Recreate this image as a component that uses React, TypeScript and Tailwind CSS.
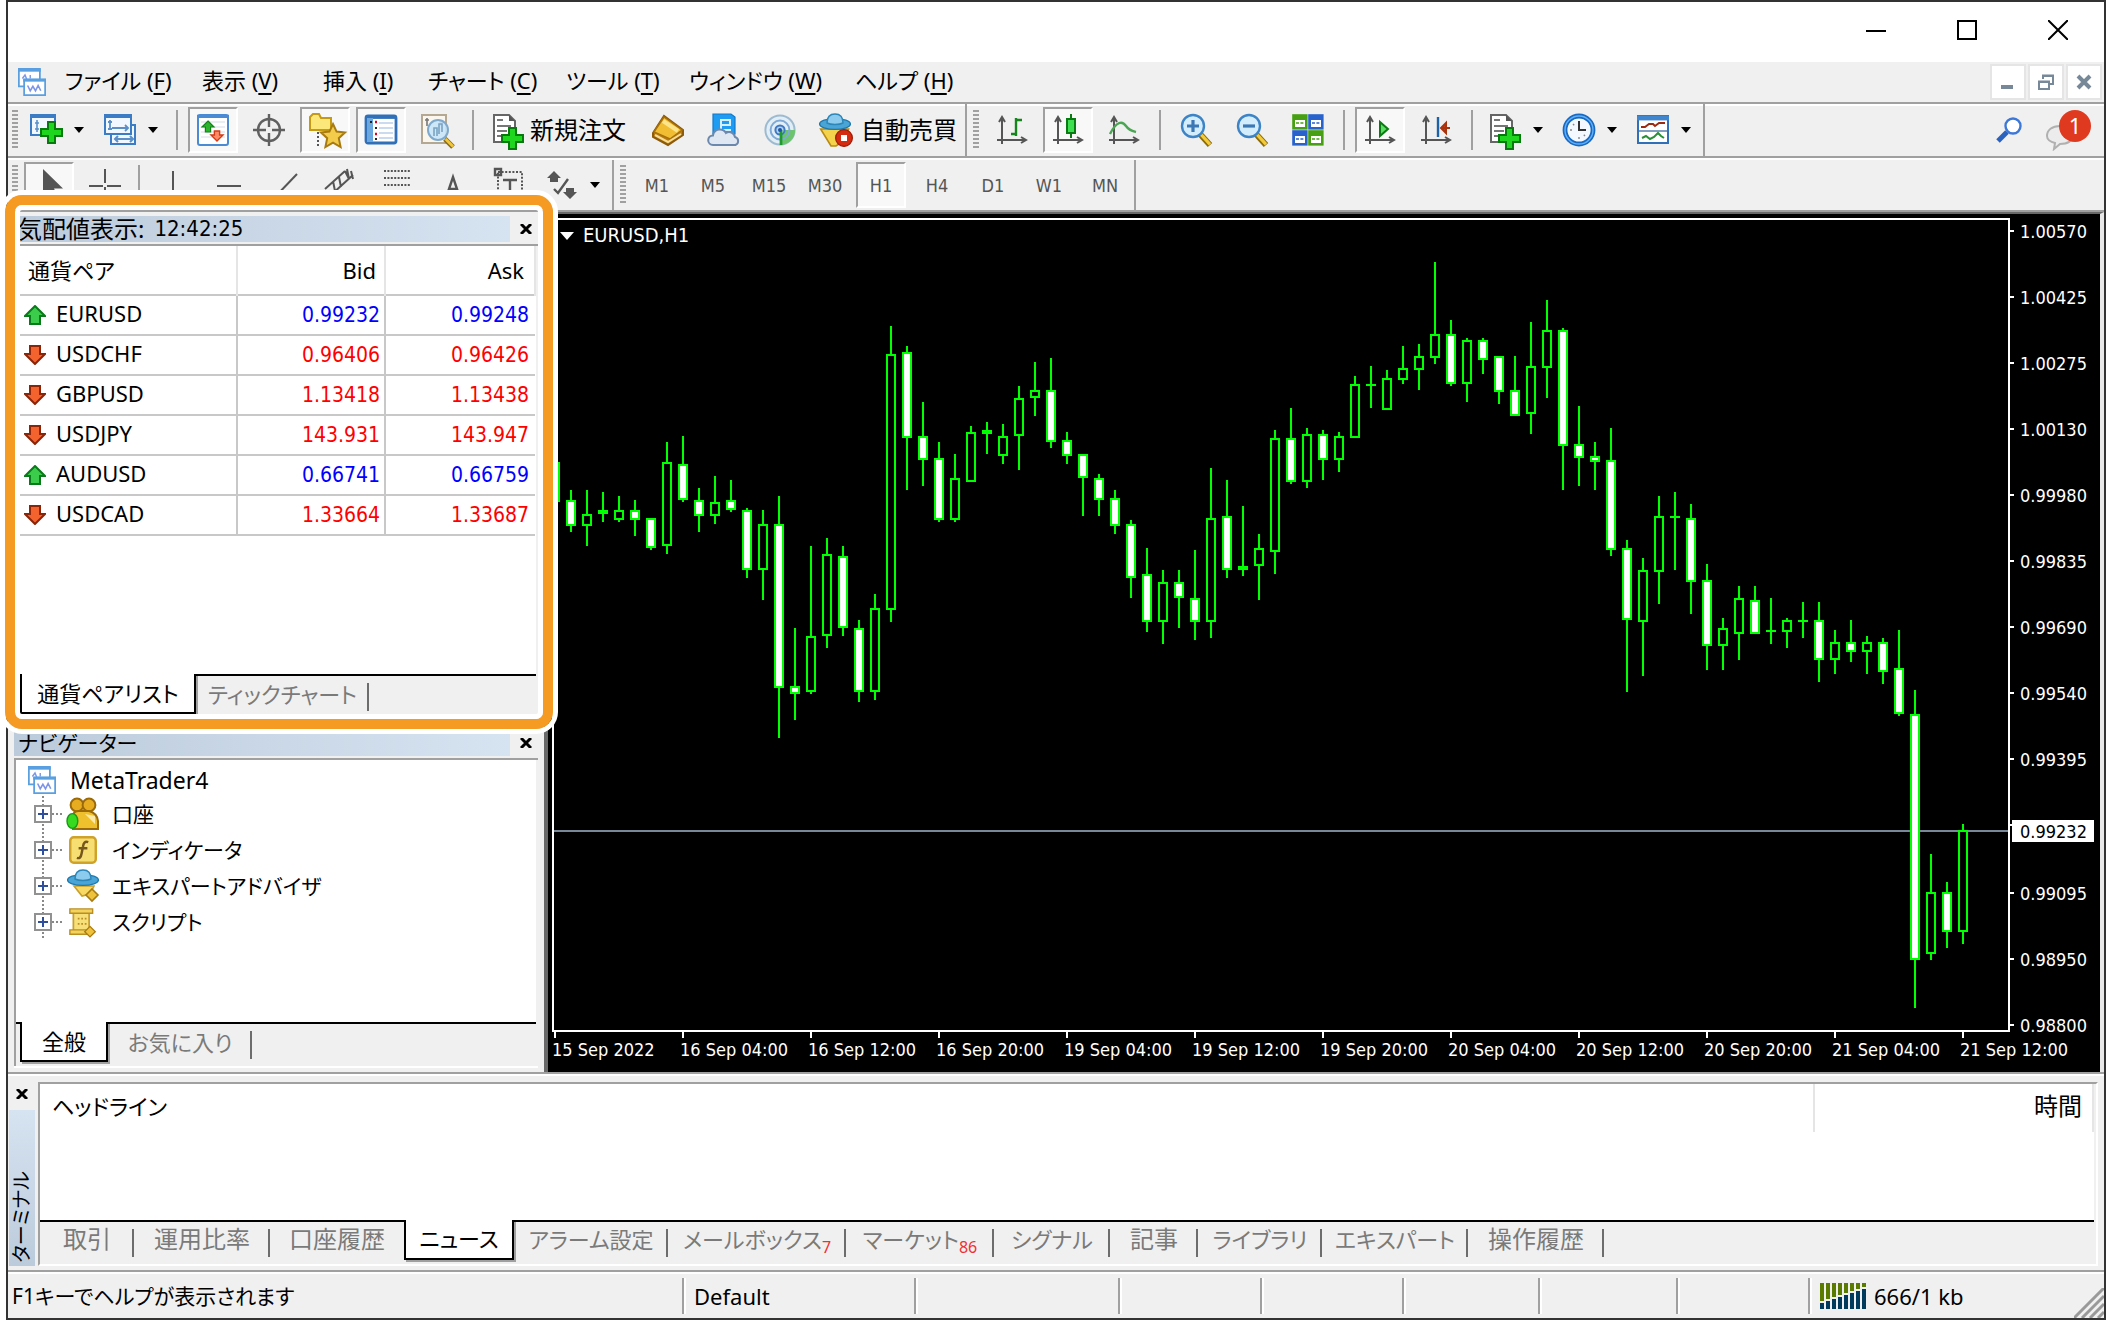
import type { ReactNode } from "react";

// [high, body top, body bottom, low, filled], one entry per hour
const candles: [number, number, number, number, number][] = [
  [126, 126, 146, 146, 1], [140, 145, 158, 161, 1], [140, 152, 158, 168, 0], [141, 150, 152, 156, 0],
  [143, 150, 155, 156, 0], [145, 150, 155, 163, 1], [154, 154, 169, 170, 1], [116, 126, 168, 172, 0],
  [113, 127, 145, 146, 1], [139, 145, 153, 161, 1], [133, 146, 153, 157, 0], [135, 145, 150, 151, 1],
  [149, 150, 180, 184, 1], [150, 157, 180, 195, 0], [143, 157, 239, 264, 1], [209, 238, 242, 255, 1],
  [168, 213, 241, 242, 0], [164, 172, 213, 219, 0], [168, 173, 209, 213, 1], [205, 209, 241, 246, 1],
  [192, 199, 241, 245, 0], [58, 72, 200, 206, 0], [68, 71, 114, 140, 1], [96, 113, 125, 138, 1],
  [116, 124, 155, 156, 1], [122, 134, 155, 156, 0], [108, 111, 136, 136, 0], [106, 110, 112, 122, 0],
  [107, 113, 123, 127, 0], [88, 94, 113, 130, 0], [76, 90, 94, 103, 0], [74, 90, 116, 119, 1],
  [111, 115, 123, 127, 1], [122, 122, 134, 153, 1], [132, 134, 145, 153, 1], [140, 144, 158, 162, 1],
  [155, 157, 184, 194, 1], [169, 182, 206, 211, 1], [180, 186, 206, 217, 0], [180, 186, 194, 209, 1],
  [170, 194, 206, 215, 1], [129, 154, 206, 214, 0], [135, 153, 180, 184, 1], [148, 178, 180, 183, 0],
  [162, 169, 178, 195, 0], [110, 114, 171, 182, 0], [99, 114, 136, 137, 1], [109, 112, 136, 139, 0],
  [110, 112, 125, 135, 1], [111, 113, 125, 131, 0], [83, 87, 114, 114, 0], [78, 87, 88, 99, 0],
  [80, 84, 100, 100, 0], [68, 79, 85, 87, 0], [67, 73, 80, 90, 0], [26, 62, 74, 77, 0],
  [55, 62, 87, 88, 1], [64, 65, 87, 96, 0], [64, 65, 75, 82, 1], [73, 73, 91, 97, 1],
  [73, 90, 103, 103, 1], [56, 78, 102, 112, 0], [45, 60, 79, 94, 0], [59, 60, 118, 140, 1],
  [98, 117, 124, 138, 1], [116, 123, 126, 140, 1], [109, 125, 170, 173, 1], [165, 169, 205, 241, 1],
  [174, 180, 206, 233, 0], [143, 153, 181, 197, 0], [141, 153, 154, 180, 0], [147, 154, 186, 202, 1],
  [177, 185, 218, 230, 1], [204, 209, 218, 230, 0], [188, 194, 212, 225, 0], [188, 195, 212, 212, 1],
  [194, 210, 211, 217, 0], [204, 205, 211, 219, 0], [196, 205, 206, 214, 0], [196, 205, 225, 236, 1],
  [210, 216, 225, 232, 0], [205, 216, 221, 226, 1], [213, 216, 221, 232, 0], [214, 216, 231, 237, 1],
  [210, 229, 252, 253, 1], [240, 252, 375, 399, 1], [322, 341, 372, 375, 0], [336, 341, 361, 369, 1],
  [307, 310, 361, 367, 0],
];

const currentPrice = { label: "0.99232", y: 617 };

// the tick right behind the current price carries no label
const priceTicks: [string, number][] = [
  ["1.00570", 17], ["1.00425", 83], ["1.00275", 149], ["1.00130", 215], ["0.99980", 281],
  ["0.99835", 347], ["0.99690", 413], ["0.99540", 479], ["0.99395", 545], ["", 611],
  ["0.99095", 679], ["0.98950", 745], ["0.98800", 811],
];

const timeTicks = [
  "15 Sep 2022", "16 Sep 04:00", "16 Sep 12:00", "16 Sep 20:00", "19 Sep 04:00", "19 Sep 12:00",
  "19 Sep 20:00", "20 Sep 04:00", "20 Sep 12:00", "20 Sep 20:00", "21 Sep 04:00", "21 Sep 12:00",
];

const quotes = [
  { symbol: "EURUSD", bid: "0.99232", ask: "0.99248", up: true },
  { symbol: "USDCHF", bid: "0.96406", ask: "0.96426", up: false },
  { symbol: "GBPUSD", bid: "1.13418", ask: "1.13438", up: false },
  { symbol: "USDJPY", bid: "143.931", ask: "143.947", up: false },
  { symbol: "AUDUSD", bid: "0.66741", ask: "0.66759", up: true },
  { symbol: "USDCAD", bid: "1.33664", ask: "1.33687", up: false },
];

const menus = [
  { label: "ファイル", accel: "F", width: "w-[137px]" },
  { label: "表示", accel: "V", width: "w-[121px]" },
  { label: "挿入", accel: "I", width: "w-[105px]" },
  { label: "チャート", accel: "C", width: "w-[138px]" },
  { label: "ツール", accel: "T", width: "w-[123px]" },
  { label: "ウィンドウ", accel: "W", width: "w-[166px]" },
  { label: "ヘルプ", accel: "H", width: "w-[120px]" },
];

const terminalTabs = [
  { label: "取引", width: "w-[94px]", size: "text-[24px]" },
  { label: "運用比率", width: "w-[136px]", size: "text-[24px]" },
  { label: "口座履歴", width: "w-[134px]", size: "text-[24px]" },
  { label: "ニュース", width: "w-[110px]", size: "text-[22px]", active: true },
  { label: "アラーム設定", width: "w-[154px]", size: "text-[22px]" },
  { label: "メールボックス", width: "w-[178px]", size: "text-[22px]", count: "7" },
  { label: "マーケット", width: "w-[148px]", size: "text-[22px]", count: "86" },
  { label: "シグナル", width: "w-[116px]", size: "text-[22px]" },
  { label: "記事", width: "w-[88px]", size: "text-[24px]" },
  { label: "ライブラリ", width: "w-[124px]", size: "text-[22px]" },
  { label: "エキスパート", width: "w-[146px]", size: "text-[22px]" },
  { label: "操作履歴", width: "w-[136px]", size: "text-[24px]" },
];

const timeframes = ["M1", "M5", "M15", "M30", "H1", "H4", "D1", "W1", "MN"];

const Icon = ({ children, className = "size-8" }: { children: ReactNode; className?: string }) => (
  <svg viewBox="0 0 16 16" className={`${className} shrink-0 overflow-visible`} fill="none" aria-hidden="true">
    {children}
  </svg>
);

const Plus = ({ x, y }: { x: number; y: number }) => (
  <path
    transform={`translate(${x} ${y})`}
    d="M4 .5h3.500v3.500h3.500v3.500h-3.500v3.500h-3.500v-3.500h-3.500v-3.500h3.500z"
    fill="#1fd61f"
    stroke="#067a0c"
  />
);

const Gem = ({ x, y }: { x: number; y: number }) => (
  <path transform={`translate(${x} ${y})`} d="M3 0l3 3-3 3-3-3z" fill="#eec23c" stroke="#a87b12" strokeWidth=".8" />
);

const Axes = () => (
  <path d="M3 15V2M1.500 4L3 1.500 4.500 4M.5 13H15M12.500 11.500L15 13l-2.500 1.500" stroke="#555" />
);

const NewChartIcon = () => (
  <Icon>
    <rect x=".5" y=".5" width="12" height="10" fill="#f2f8ff" stroke="#3b7cc4" />
    <path d="M0 1h13" stroke="#3b7cc4" strokeWidth="2" />
    <path d="M3.500 3v6M2.500 4.500h2M2.500 7.500h2M5 8.500h4" stroke="#5a8fc8" strokeWidth=".8" />
    <Plus x={5} y={3.5} />
  </Icon>
);

const ProfilesIcon = () => (
  <Icon>
    <rect x="3.500" y="5.500" width="12" height="9.500" fill="#f2f8ff" stroke="#3b7cc4" />
    <path d="M6 12.500h8M7 11l-1.500 1.500L7 14M13 11l1.500 1.500L13 14" stroke="#5a8fc8" />
    <rect x=".5" y=".5" width="13" height="9.500" fill="#f2f8ff" stroke="#3b7cc4" />
    <path d="M0 1h14" stroke="#3b7cc4" strokeWidth="2" />
    <path d="M3 3v5M2 4h2M2 7.500h2M4 7h8M10.500 5.500L12 7l-1.500 1.500" stroke="#5a8fc8" strokeWidth=".9" />
  </Icon>
);

const MarketWatchIcon = () => (
  <Icon>
    <rect x=".5" y=".5" width="15" height="15" rx="1" fill="#fff" stroke="#4a8bd4" />
    <path d="M0 1.200h16" stroke="#4a8bd4" strokeWidth="1.600" />
    <path d="M2 4h12M2 6.500h12M2 9h12M2 11.500h12" stroke="#d4dde6" strokeWidth=".5" />
    <path d="M5.500 3.500l3 3H6.800V9H4.200V6.500H2.500z" fill="#2cb52c" stroke="#14821a" strokeWidth=".6" />
    <path d="M10 13.500l-3-3h1.700V8.500h2.600v2H13z" fill="#ff8b66" stroke="#d23b15" strokeWidth=".7" />
  </Icon>
);

const CrosshairIcon = () => (
  <Icon>
    <circle cx="8" cy="8" r="5.500" stroke="#606060" strokeWidth="1.200" />
    <path d="M8 0v6.500M8 9.500V16M0 8h6.500M9.500 8H16" stroke="#606060" strokeWidth="1.200" />
  </Icon>
);

const FolderStarIcon = () => (
  <Icon>
    <path d="M.5 1.500L2 0h3l1 2h5v6H.5z" fill="#fbe77a" stroke="#c79a14" />
    <path d="M4.500 9v8" stroke="#555" strokeDasharray="1 1" />
    <path d="M12 5l1.800 3.800 4.200.5-3.100 2.800.9 4.400-3.800-2.200-3.800 2.200.9-4.400L6 9.300l4.200-.5z" fill="#f2cc4a" stroke="#a87b12" />
  </Icon>
);

const DataWindowIcon = () => (
  <Icon>
    <rect x=".5" y="1" width="15" height="13.500" rx="1" fill="#fff" stroke="#2f70b8" strokeWidth="1.400" />
    <path d="M1 1.700h14" stroke="#2f70b8" strokeWidth="1.500" />
    <rect x="1" y="2" width="3" height="12" fill="#6ba8e0" />
    <path d="M7 4.500h7M7 7h7M7 9.500h7M7 12h7" stroke="#b9cfea" strokeWidth=".8" />
    <path d="M5 4h1M5 10h1" stroke="#e00024" strokeWidth="1.200" />
    <path d="M5 7h1M5 12.500h1M2.500 4h1" stroke="#222" />
  </Icon>
);

const TesterIcon = () => (
  <Icon>
    <rect x=".5" y=".5" width="12" height="14" fill="#faf6ee" stroke="#b5a892" />
    <path d="M3 2v4M2 3h2M10 3v3M9 4h2" stroke="#777" strokeWidth=".8" />
    <circle cx="8.500" cy="8" r="5" fill="#c8e6fa" fillOpacity=".9" stroke="#7fa9cc" />
    <path d="M6.500 11V7h1.500v4M9 10V5h1.500v4" stroke="#7aa3c4" strokeWidth=".8" />
    <path d="M12 12.500l4 4" stroke="#8b6a10" strokeWidth="2.600" />
    <path d="M12.300 12.500l3.700 3.700" stroke="#f0c63c" strokeWidth="1.400" />
  </Icon>
);

const NewOrderIcon = () => (
  <Icon>
    <path d="M1 .5h7.500l3 3V14H1z" fill="#fff" stroke="#666" />
    <path d="M8.500.5v3h3z" fill="#555" />
    <path d="M2.500 3h3M2.500 6h7M2.500 8.500h5M2.500 11h4" stroke="#777" />
    <Plus x={4.5} y={6.500} />
  </Icon>
);

const BookIcon = () => (
  <Icon>
    <path d="M.5 9.500L6 1l9.500 7v2.500L8 15.500.5 11.500z" fill="#b57a12" stroke="#8c5a0a" />
    <path d="M1 9L6 1.500 15 8l-6 4.500z" fill="#f0bd33" stroke="#a87008" strokeWidth=".7" />
    <path d="M5.500 3.500L13 8.500" stroke="#fbe48a" strokeWidth="2" />
    <path d="M1.500 10.500L8 14l6.500-4" stroke="#f7dc94" />
  </Icon>
);

const CloudPhoneIcon = () => (
  <Icon>
    <path d="M2.500 0h9l2 1.500V10h-11z" fill="#1e9bf2" stroke="#1478c8" strokeWidth=".6" />
    <path d="M6 3h5.500M6 5.500h5.500M6 8h5.500M6.500 3v5M11 3v2.500" stroke="#d6efff" />
    <path d="M2.500 15.500a2.400 2.400 0 010-4.800 3.500 3.500 0 016.500-1.200 3 3 0 014.500 2 2.100 2.100 0 01.2 4z" fill="#dfe7f2" stroke="#6c88ad" />
  </Icon>
);

const SignalIcon = () => (
  <Icon>
    <circle cx="8" cy="8" r="7.300" fill="#e2eef6" stroke="#9dbbd0" />
    <path d="M8.500 8L15.500 8A7.300 7.300 0 018.500 15.500z" fill="#6cc56c" />
    <circle cx="8" cy="8" r="4.700" stroke="#7fa9d6" />
    <circle cx="8" cy="8" r="2.300" fill="#b4d1f0" stroke="#3f78c4" />
    <path d="M8.500 8v7.500" stroke="#1f9a2e" strokeWidth="1.400" />
    <circle cx="8" cy="8" r="1" fill="#1d56a8" />
  </Icon>
);

const Hat = () => (
  <>
    <ellipse cx="8" cy="5" rx="7.700" ry="2.700" fill="#4aa5d6" stroke="#1d78ad" strokeWidth=".7" />
    <path d="M4 4.500C4 1.500 5.500 0 8 0s4 1.500 4 4.500c-2 1-6 1-8 0z" fill="#8ccbee" stroke="#2c86b8" strokeWidth=".7" />
  </>
);

const AutoTradeIcon = () => (
  <Icon>
    <path d="M.8 7.500h14L13 13l-4.500 3H6z" fill="#f5d24c" stroke="#b88a14" strokeWidth=".8" />
    <Hat />
    <circle cx="12.500" cy="12" r="4.200" fill="#d42a10" stroke="#9c1b06" strokeWidth=".6" />
    <rect x="11" y="10.500" width="3" height="3" fill="#fff" />
  </Icon>
);

const ZoomIcon = ({ plus }: { plus?: boolean }) => (
  <Icon>
    <path d="M10 10l5 5.500" stroke="#8b6a10" strokeWidth="3" />
    <path d="M10.300 10l4.700 5.200" stroke="#f3cb3a" strokeWidth="1.600" />
    <circle cx="6.500" cy="6" r="5.500" fill="#d4edfc" stroke="#3d84c6" strokeWidth="1.200" />
    <path d={plus ? "M3.500 6h6M6.500 3v6" : "M3.500 6h6"} stroke="#3c78b4" strokeWidth="1.600" />
  </Icon>
);

const TileIcon = () => (
  <Icon>
    {[[0, 0, "#46a012"], [8, 0, "#2862cc"], [0, 8, "#2862cc"], [8, 8, "#46a012"]].map(([x, y, fill]) => (
      <g key={`${x}-${y}`} transform={`translate(${x} ${y})`}>
        <path d="M.1.100h7.700v7.700H.1z" fill={fill as string} />
        <path d="M1.500 3h5v3.500h-5z" fill="#fff" />
        <path d="M2 4.500h4" stroke={fill as string} strokeWidth=".7" strokeDasharray="1.500 .7" />
      </g>
    ))}
  </Icon>
);

const ClockIcon = () => (
  <Icon>
    <circle cx="8" cy="8" r="7" fill="#f4f9ff" stroke="#1769c4" strokeWidth="2.400" />
    <circle cx="8" cy="8" r="7" stroke="#62b0f5" strokeWidth=".7" />
    <path d="M8 3.500V8h3.500" stroke="#333" />
    <path d="M8 12.500v-1M3.500 8h1M5 5l.6.6M11 11l-.6-.6" stroke="#888" strokeWidth=".7" />
  </Icon>
);

const TemplateIcon = () => (
  <Icon>
    <rect x=".5" y="1" width="15" height="13.500" fill="#fff" stroke="#2f70b8" />
    <path d="M0 2h16" stroke="#3f86cf" strokeWidth="2.400" />
    <path d="M1 8.500h14" stroke="#7f9ec0" />
    <path d="M2 6.500h2l2-1.500h2l1 1 2-1.500h3" stroke="#9c2a10" />
    <path d="M2.500 12l2-1 2 1.500 2-1 2-2 1.500 1.500 1.500 1" stroke="#2a9038" />
  </Icon>
);

const TerminalLogo = ({ className = "size-7" }: { className?: string }) => (
  <Icon className={className}>
    <rect x=".5" y=".5" width="12" height="10" fill="#fff" stroke="#5a9fe0" />
    <path d="M0 1.200h13" stroke="#5a9fe0" strokeWidth="1.800" />
    <path d="M2.500 6l1.500-2 1 2.500M7 4v2" stroke="#7d95e8" strokeWidth=".8" />
    <rect x="3.500" y="6.500" width="12" height="9" fill="#fff" stroke="#5a9fe0" />
    <path d="M3 7h13" stroke="#5a9fe0" strokeWidth="1.600" />
    <path d="M5.500 10l1.500 3 1.500-2.500L10 13l1.500-3L13 13" stroke="#7d95e8" strokeWidth=".9" />
  </Icon>
);

const Caret = () => (
  <svg viewBox="0 0 10 6" className="h-[6px] w-[10px] shrink-0" aria-hidden="true">
    <path d="M0 0h10L5 6z" fill="#000" />
  </svg>
);

const CloseMark = () => (
  <svg viewBox="0 0 12 10" className="h-[10px] w-3" aria-hidden="true">
    <path d="M1 0l10 10M11 0L1 10" stroke="#000" strokeWidth="3" />
  </svg>
);

const ToolButton = ({ children, label, pressed }: { children: ReactNode; label: string; pressed?: boolean }) => (
  <button
    aria-label={label}
    className={`flex h-[46px] w-[50px] shrink-0 items-center justify-center border-2 text-[18px] text-[#555] ${
      pressed ? "border-t-[#a0a0a0] border-r-white border-b-white border-l-[#a0a0a0] bg-[#f8f8f8]" : "border-transparent"
    }`}
  >
    {children}
  </button>
);

const DropButton = ({ children, label }: { children: ReactNode; label: string }) => (
  <button aria-label={label} className="flex h-[46px] w-[68px] shrink-0 items-center justify-between pr-2 pl-[6px]">
    {children}
    <Caret />
  </button>
);

const Separator = ({ className = "mx-1" }: { className?: string }) => (
  <div className={`h-10 w-[2px] shrink-0 bg-[#a0a0a0] ${className}`} />
);

const Grip = () => (
  <div className="h-10 w-[6px] shrink-0 bg-[repeating-linear-gradient(to_bottom,#a0a0a0_0_2px,#f0f0f0_2px_4px)]" />
);

const PanelTitle = ({ children }: { children: ReactNode }) => (
  <div className="flex h-[26px] shrink-0 items-center">
    <h2 className="flex h-full flex-1 items-center bg-linear-to-r from-[#bccbdb] to-[#d6e3f1] pl-1 leading-[26px]">
      {children}
    </h2>
    <button aria-label="閉じる" className="flex w-7 items-center justify-center pl-1">
      <CloseMark />
    </button>
  </div>
);

const PanelTab = ({ label, active, width }: { label: string; active?: boolean; width: string }) => (
  <button
    className={`relative -mt-[2px] flex h-10 shrink-0 items-center justify-center whitespace-nowrap ${width} ${
      active ? "border-2 border-t-0 border-black bg-white text-black shadow-[2px_2px_0_#a0a0a0]" : "text-[#7a7a7a]"
    }`}
  >
    {label}
    {!active && <span className="absolute top-[9px] right-0 h-7 w-[2px] bg-[#6d6d6d]" />}
  </button>
);

const Chart = () => (
  <svg
    viewBox="0 0 1552 858"
    className="h-full w-full bg-black font-['DejaVu_Sans_Condensed','DejaVu_Sans',sans-serif] text-[18px]"
    role="img"
    aria-label="EURUSD,H1"
  >
    <g shapeRendering="crispEdges">
      <path d="M4 4h1456v2H4zM4 816h1458v2H4zM4 4h2v812H4zM1460 4h2v812h-2z" fill="#fff" />
      <rect x="6" y={currentPrice.y - 1} width="1454" height="2" fill="#778899" />
      {candles.map(([high, top, bottom, low, filled], i) => {
        const x = 7 + i * 16;
        return (
          <g key={i} transform="translate(0 -4)">
            <rect x={x - 1} y={high * 2} width="2" height={(low - high) * 2} fill="#0f0" />
            <rect x={x - 5} y={top * 2} width="10" height={(bottom - top) * 2} fill="#0f0" />
            {bottom - top > 2 && (
              <rect x={x - 3} y={top * 2 + 2} width="6" height={(bottom - top) * 2 - 4} fill={filled ? "#fff" : "#000"} />
            )}
          </g>
        );
      })}
      {priceTicks.map(([, y]) => (
        <rect key={y} x="1462" y={y - 1} width="4" height="2" fill="#fff" />
      ))}
      {timeTicks.map((time, i) => (
        <rect key={time} x={6 + i * 128} y="818" width="2" height="6" fill="#fff" />
      ))}
    </g>
    <g fill="#fff">
      {priceTicks.filter(([price]) => price).map(([price, y]) => (
        <text key={price} x="1472" y={y + 7}>{price}</text>
      ))}
      {timeTicks.map((time, i) => (
        <text key={time} x={4 + i * 128} y="842">{time}</text>
      ))}
      <path d="M12 18h14l-7 8z" />
      <text x="35" y="28" className="text-[20px]">EURUSD,H1</text>
      <rect x="1464" y="606" width="82" height="22" />
    </g>
    <text x="1472" y={currentPrice.y + 7} fill="#000">{currentPrice.label}</text>
  </svg>
);

const MarketWatch = () => (
  <section className="flex h-[508px] shrink-0 flex-col border-b-2 border-white pt-1">
    <PanelTitle>
      <span className="text-[24px]">気配値表示:</span>
      <time className="ml-[10px] font-['DejaVu_Sans_Condensed','DejaVu_Sans',sans-serif] text-[22px]">12:42:25</time>
    </PanelTitle>
    <div className="mt-[2px] flex flex-1 flex-col border-t-2 border-l-2 border-[#a0a0a0] bg-[#f0f0f0]">
      <div className="mr-[2px] flex-1 bg-white">
        <table className="w-full table-fixed border-collapse text-[22px] leading-[30px]">
          <colgroup>
            <col />
            <col className="w-[148px]" />
            <col className="w-[150px]" />
          </colgroup>
          <thead>
            <tr className="h-[49px] border-b-2 border-[#c8c8c8]">
              <th className="border-r-2 border-[#e5e5e5] pl-3 text-left font-normal">通貨ペア</th>
              <th className="border-r-2 border-[#e5e5e5] pr-2 text-right font-normal">Bid</th>
              <th className="border-r-2 border-[#e5e5e5] pr-[10px] text-right font-normal">Ask</th>
            </tr>
          </thead>
          <tbody>
            {quotes.map(({ symbol, bid, ask, up }) => (
              <tr key={symbol} className="h-10 border-b-2 border-[#c8c8c8]">
                <td className="border-r-2 border-[#c8c8c8] pb-1 pl-2">
                  <span className="flex items-center gap-[10px]">
                    <svg viewBox="0 0 22 20" className="mt-1 h-5 w-[22px] shrink-0" aria-hidden="true">
                      {up ? (
                        <path d="M11 1l10 10h-5v8H6v-8H1z" fill="#3ccc4c" stroke="#0b7a1a" strokeWidth="2" />
                      ) : (
                        <path d="M11 19L1 9h5V1h10v8h5z" fill="#f4622e" stroke="#8c2408" strokeWidth="2" />
                      )}
                    </svg>
                    {symbol}
                  </span>
                </td>
                {[bid, ask].map((price, i) => (
                  <td
                    key={i}
                    className={`text-right font-['DejaVu_Sans_Condensed','DejaVu_Sans',sans-serif] text-[21px] ${
                      up ? "text-[#0000ff]" : "text-[#ff0000]"
                    } ${i === 0 ? "border-r-2 border-[#c8c8c8] pr-1" : "pr-[6px]"}`}
                  >
                    {price}
                  </td>
                ))}
              </tr>
            ))}
          </tbody>
        </table>
      </div>
      <div className="mr-[2px] flex h-[44px] border-t-2 border-black pl-1 text-[22px]">
        <PanelTab label="通貨ペアリスト" active width="w-[176px]" />
        <PanelTab label="ティックチャート" width="w-[173px]" />
      </div>
    </div>
  </section>
);

const TreeRow = ({ label, children }: { label: string; children: ReactNode }) => (
  <li className="flex h-9 items-center">
    <span className="h-full w-[2px] bg-[repeating-linear-gradient(to_bottom,#888_0_2px,#fff_2px_4px)]" />
    <button
      aria-label={`${label}を展開`}
      className="relative -ml-[10px] flex size-[18px] items-center justify-center border-2 border-[#919191] bg-white"
    >
      <svg viewBox="0 0 10 10" className="size-[10px]" aria-hidden="true">
        <path d="M0 5h10M5 0v10" stroke="#2f4f9c" strokeWidth="2" />
      </svg>
    </button>
    <span className="h-[2px] w-3 bg-[repeating-linear-gradient(to_right,#888_0_2px,#fff_2px_4px)]" />
    <span className="ml-[2px] flex w-[34px] justify-center">{children}</span>
    <span className="ml-3">{label}</span>
  </li>
);

const Navigator = () => (
  <section className="flex min-h-0 flex-1 flex-col border-b-2 border-white pt-[10px]">
    <PanelTitle>
      <span className="text-[21px]">ナビゲーター</span>
    </PanelTitle>
    <div className="mt-[2px] flex flex-1 flex-col border-t-2 border-l-2 border-[#a0a0a0]">
      <div className="mr-[2px] flex-1 bg-white leading-9">
        <div className="flex h-9 items-center gap-[14px] pt-1 pl-3 text-[23px]">
          <TerminalLogo />
          <span>MetaTrader4</span>
        </div>
        <ul className="pl-[26px] text-[21px]">
          <TreeRow label="口座">
            <Icon className="size-8">
              <circle cx="5" cy="3.500" r="3.200" fill="#e8ac20" stroke="#9a6a0a" />
              <circle cx="11" cy="3.500" r="3.200" fill="#e8ac20" stroke="#9a6a0a" />
              <path d="M3 15.500V9q0-2.500 3-2.500h5q4 1 4.500 5v4z" fill="#efc02e" stroke="#9a6a0a" />
              <path d="M9 8l5 5V9z" fill="#fbe9a4" />
              <ellipse cx="2.700" cy="11.500" rx="2.700" ry="3.700" fill="#36da1e" stroke="#1c961a" strokeWidth=".7" />
            </Icon>
          </TreeRow>
          <TreeRow label="インディケータ">
            <Icon className="size-7">
              <rect x=".7" y=".7" width="14.600" height="14.600" rx="2" fill="#f7de72" stroke="#cfa22a" strokeWidth="1.400" />
              <path d="M11 3.500c-2-.7-2.700.5-3 2.500L7.200 10c-.4 2.300-1.200 3-2.700 2.500M5.500 7h5" stroke="#75561c" strokeWidth="1.400" />
            </Icon>
          </TreeRow>
          <TreeRow label="エキスパートアドバイザ">
            <Icon className="size-8">
              <path d="M3.500 8h10l-2 4-4 1z" fill="#f7d964" stroke="#caa02c" strokeWidth=".8" />
              <Hat />
              <Gem x={9.500} y={9.5} />
            </Icon>
          </TreeRow>
          <TreeRow label="スクリプト">
            <Icon className="size-7">
              <path d="M2.500 2h9v12h-9z" fill="#f7df7a" stroke="#c8a030" />
              <path d="M.5.5h13V3H.5zM.5 12.500h11V15H.5z" fill="#f3d35c" stroke="#b98f22" strokeWidth=".8" />
              <path d="M5 6h5M5 9h5" stroke="#b98f22" strokeDasharray="1 1" />
              <Gem x={9} y={10.500} />
            </Icon>
          </TreeRow>
        </ul>
      </div>
      <div className="mr-[2px] flex h-[44px] border-t-2 border-black pl-1 text-[22px]">
        <PanelTab label="全般" active width="w-[88px]" />
        <PanelTab label="お気に入り" width="w-[144px]" />
      </div>
    </div>
  </section>
);

const MainToolbar = () => (
  <div className="flex h-[54px] items-center border-b-2 border-[#a0a0a0] shadow-[0_2px_0_#fff]">
    <div className="flex items-center gap-[6px] pl-1">
      <Grip />
      <DropButton label="新規チャート"><NewChartIcon /></DropButton>
      <DropButton label="チャートの組表示"><ProfilesIcon /></DropButton>
      <Separator />
      <ToolButton label="気配値表示" pressed><MarketWatchIcon /></ToolButton>
      <ToolButton label="データウィンドウ"><CrosshairIcon /></ToolButton>
      <ToolButton label="ナビゲーター" pressed><FolderStarIcon /></ToolButton>
      <ToolButton label="ターミナル" pressed><DataWindowIcon /></ToolButton>
      <ToolButton label="ストラテジーテスター"><TesterIcon /></ToolButton>
      <Separator />
      <button className="flex h-[46px] w-[153px] items-center gap-[6px] pl-2 text-[24px] whitespace-nowrap">
        <NewOrderIcon />
        新規注文
      </button>
      <ToolButton label="メタエディター"><BookIcon /></ToolButton>
      <ToolButton label="マーケット"><CloudPhoneIcon /></ToolButton>
      <ToolButton label="シグナル"><SignalIcon /></ToolButton>
      <button className="flex h-[46px] w-[154px] items-center gap-[10px] pl-2 text-[24px] whitespace-nowrap">
        <AutoTradeIcon />
        自動売買
      </button>
    </div>
    <div className="flex h-[52px] items-center gap-[6px] border-r-2 border-l-2 border-[#a0a0a0] pr-1 pl-[6px]">
      <Grip />
      <div className="ml-[2px] flex gap-[6px]">
        <ToolButton label="バーチャート">
          <Icon><Axes /><path d="M10 2v9M10 3h3M7.500 10H10" stroke="#14861c" strokeWidth="1.200" /></Icon>
        </ToolButton>
        <ToolButton label="ローソク足" pressed>
          <Icon><Axes /><path d="M9.500 0v12" stroke="#0a7a12" /><rect x="7.500" y="2.500" width="4" height="7" fill="#3ee052" stroke="#0a7a12" /></Icon>
        </ToolButton>
        <ToolButton label="ラインチャート">
          <Icon><Axes /><path d="M1 10c3-6 6-7 8-4 1.500 2.200 3 2.500 5 3" stroke="#4aa652" strokeWidth="1.200" /></Icon>
        </ToolButton>
      </div>
      <Separator />
      <ToolButton label="ズームイン"><ZoomIcon plus /></ToolButton>
      <ToolButton label="ズームアウト"><ZoomIcon /></ToolButton>
      <ToolButton label="ウィンドウの整列"><TileIcon /></ToolButton>
      <Separator />
      <ToolButton label="自動スクロール" pressed>
        <Icon><Axes /><path d="M8 4l4 3.500L8 11z" fill="#5bdc62" stroke="#0a7a12" /></Icon>
      </ToolButton>
      <ToolButton label="チャートシフト">
        <Icon><Axes /><path d="M9 1.500v10" stroke="#1c62a8" strokeWidth="1.200" /><path d="M15 7h-4M13 4.500L10.500 7 13 9.500z" fill="#c0441c" stroke="#a8330c" /></Icon>
      </ToolButton>
      <Separator />
      <DropButton label="インディケータ"><NewOrderIcon /></DropButton>
      <DropButton label="時間足設定"><ClockIcon /></DropButton>
      <DropButton label="定型チャート"><TemplateIcon /></DropButton>
    </div>
    <div className="ml-auto flex items-center gap-6 pr-3">
      <button aria-label="検索">
        <svg viewBox="0 0 26 26" className="size-[26px]" fill="none" aria-hidden="true">
          <circle cx="17" cy="9" r="7.500" fill="#fff" stroke="#3d78d8" strokeWidth="2.400" />
          <path d="M11 15l-9 9" stroke="#2a62be" strokeWidth="5" />
        </svg>
      </button>
      <button aria-label="通知 1" className="flex">
        <svg viewBox="0 0 46 42" className="h-[42px] w-[46px]" aria-hidden="true">
          <path d="M1 27c0-6 5-10 13-10s12 4 12 10-5 8-12 8l-6 5 1-6c-5-1-8-4-8-7z" fill="#ececec" stroke="#b0b0b0" strokeWidth="2" />
          <circle cx="29" cy="17" r="16" fill="#df3a20" />
          <text x="29" y="25" textAnchor="middle" fill="#fff" className="font-['Noto_Sans',sans-serif] text-[22px]">1</text>
        </svg>
      </button>
    </div>
  </div>
);

const LineToolbar = () => (
  <div className="flex h-[54px] items-center border-b-2 border-[#a0a0a0] pt-[2px]">
    <div className="flex items-center gap-[6px] pl-1">
      <Grip />
      <ToolButton label="カーソル" pressed>
        <Icon><path d="M5 0v14l3.500-3.500 2 4.500 2-1-2-4.200H15z" fill="#555" /></Icon>
      </ToolButton>
      <ToolButton label="十字カーソル">
        <Icon><path d="M8 0v7M8 9v7M0 8.500h7M9 8.500h7" stroke="#555" /></Icon>
      </ToolButton>
      <Separator className="mx-[2px]" />
      <ToolButton label="垂直線"><Icon><path d="M8 1v14" stroke="#555" /></Icon></ToolButton>
      <ToolButton label="水平線"><Icon><path d="M2 8.500h12" stroke="#555" /></Icon></ToolButton>
      <ToolButton label="トレンドライン"><Icon><path d="M3 14L14 2.500" stroke="#555" /></Icon></ToolButton>
      <ToolButton label="チャネル">
        <Icon><path d="M0 10L10 1M3 13L14 3M4 6l1 5M7 4l1 5M10 1l2 4M11 0l1 5M13 1l1 4" stroke="#555" /></Icon>
      </ToolButton>
      <ToolButton label="フィボナッチ">
        <Icon><path d="M1.500 1h13M1.500 4.500h13M1.500 8h13M1.500 11.500h13" stroke="#555" strokeDasharray="1 .7" /></Icon>
      </ToolButton>
      <ToolButton label="テキスト"><Icon><path d="M5 13L8 4l3 9M6 10h4" stroke="#555" strokeWidth="1.200" /></Icon></ToolButton>
      <ToolButton label="ラベル">
        <Icon>
          <rect x="2.500" y="1.500" width="12" height="13" stroke="#555" strokeDasharray="1 .8" />
          <path d="M5 5.500h7M8.500 5.500v7M1 0h3v3H1z" stroke="#555" strokeWidth="1.200" />
        </Icon>
      </ToolButton>
      <DropButton label="矢印">
        <Icon>
          <path d="M4 1l3.500 3.500H6v2H2v-2H.5zM12 15l-3.500-3.500H10v-2h4v2h1.500z" fill="#555" />
          <path d="M4 10l2 2 5-7" stroke="#555" strokeWidth="1.200" />
        </Icon>
      </DropButton>
    </div>
    <div className="ml-1 flex h-full items-center gap-[6px] border-r-2 border-l-2 border-[#a0a0a0] pl-[6px] font-['DejaVu_Sans_Condensed','DejaVu_Sans',sans-serif]">
      <Grip />
      <div className="flex gap-[6px] pr-1">
        {timeframes.map((frame) => (
          <ToolButton key={frame} label={frame} pressed={frame === "H1"}>{frame}</ToolButton>
        ))}
      </div>
    </div>
  </div>
);

const Terminal = () => (
  <section className="flex h-[190px] shrink-0 border-b-2 border-[#a0a0a0] pr-[6px] pb-1">
    <div className="flex w-[28px] shrink-0 flex-col items-center">
      <button aria-label="閉じる" className="flex h-[24px] items-center">
        <CloseMark />
      </button>
      <div className="mt-1 flex w-[26px] flex-1 items-center justify-end bg-linear-to-b from-[#d6e3f1] to-[#bccbdb] [writing-mode:vertical-rl]">
        <h2 className="rotate-180 pt-1 text-[20px] leading-[26px] [text-orientation:sideways]">ターミナル</h2>
      </div>
    </div>
    <div className="ml-[2px] flex min-w-0 flex-1 flex-col border-2 border-t-[#a0a0a0] border-r-white border-b-white border-l-[#a0a0a0]">
      <div className="mr-[2px] flex-1 bg-white">
        <table className="w-full table-fixed border-collapse text-[22px] leading-8">
          <thead>
            <tr className="h-12">
              <th className="border-r-2 border-[#e5e5e5] pb-1 pl-3 text-left font-normal">ヘッドライン</th>
              <th className="w-[279px] border-r-2 border-[#e5e5e5] pr-[10px] pb-1 text-right text-[24px] font-normal">時間</th>
            </tr>
          </thead>
        </table>
      </div>
      <div className="mr-[2px] flex h-[44px] border-t-2 border-black">
        {terminalTabs.map(({ label, width, size, active, count }, i) => (
          <button
            key={label}
            className={`relative -mt-[2px] flex h-10 shrink-0 items-center justify-center pb-[2px] whitespace-nowrap ${width} ${size} ${
              active ? "border-2 border-t-0 border-black bg-white shadow-[2px_2px_0_#a0a0a0]" : "text-[#7a7a7a]"
            }`}
          >
            {label}
            {count && <sub className="top-2 text-[16px] leading-none text-[#f03030]">{count}</sub>}
            {!active && i !== 2 && <span className="absolute top-[9px] right-0 h-7 w-[2px] bg-[#6d6d6d]" />}
          </button>
        ))}
      </div>
    </div>
  </section>
);

const StatusBar = () => (
  <footer className="flex h-[46px] shrink-0 items-center border-t-2 border-white text-[22px] leading-9">
    <div className="flex-1 pl-1 text-[21px]">F1キーでヘルプが表示されます</div>
    {["w-[232px]", "w-[204px]", "w-[142px]", "w-[142px]", "w-[136px]", "w-[138px]", "w-[132px]"].map((width, i) => (
      <div key={i} className={`h-9 shrink-0 border-l-2 border-[#a0a0a0] pl-[10px] shadow-[inset_2px_0_0_#fff] ${width}`}>
        {i === 0 && "Default"}
      </div>
    ))}
    <div className="flex h-9 w-[296px] shrink-0 items-center gap-2 border-l-2 border-[#a0a0a0] pl-[10px] shadow-[inset_2px_0_0_#fff]">
      <svg viewBox="0 0 46 26" className="h-[26px] w-[46px]" shapeRendering="crispEdges" aria-hidden="true">
        {[18, 16, 14, 12, 10, 8, 6, 4].map((h, i) => (
          <g key={h}>
            <rect x={i * 6} width="4" height={h} fill="#5a7a00" />
            <rect x={i * 6} y={h + 2} width="4" height={24 - h} fill="#003a5c" />
          </g>
        ))}
      </svg>
      666/1 kb
    </div>
    <svg viewBox="0 0 30 30" className="-ml-[30px] size-[30px] self-end" aria-hidden="true">
      <path d="M0 30L30 0M8 30L30 8M16 30L30 16M24 30l6-6" stroke="#999" strokeWidth="3" />
    </svg>
  </footer>
);

const App = () => {
  return (
    <div className="h-screen min-h-[900px] bg-white pl-[6px] font-['Noto_Sans','Noto_Sans_CJK_JP',sans-serif] text-black [font-feature-settings:'palt']">
      <div className="flex h-full flex-col border-2 border-[#333] bg-[#f0f0f0]">
        <div className="flex h-[60px] shrink-0 items-center justify-end gap-[31px] bg-white pr-4 pb-1">
          <button aria-label="最小化" className="flex size-[56px] w-[60px] items-center justify-center">
            <svg viewBox="0 0 20 20" className="size-5"><path d="M0 11h20" stroke="#000" strokeWidth="2" /></svg>
          </button>
          <button aria-label="最大化" className="flex size-[56px] w-[60px] items-center justify-center">
            <svg viewBox="0 0 20 20" className="size-5"><path d="M1 1h18v18H1z" fill="none" stroke="#000" strokeWidth="2" /></svg>
          </button>
          <button aria-label="閉じる" className="flex size-[56px] w-[60px] items-center justify-center">
            <svg viewBox="0 0 20 20" className="size-5"><path d="M0 0l20 20M20 0L0 20" stroke="#000" strokeWidth="2" /></svg>
          </button>
        </div>

        <nav className="flex h-[42px] shrink-0 items-center border-b-2 border-[#a0a0a0] pl-[10px] text-[22px] leading-9 shadow-[0_2px_0_#fff]">
          <TerminalLogo />
          <div className="ml-[19px] flex pb-1">
            {menus.map(({ label, accel, width }) => (
              <button key={label} className={`text-left whitespace-nowrap ${width}`}>
                {label} (<span className="underline underline-offset-4">{accel}</span>)
              </button>
            ))}
          </div>
          <div className="ml-auto flex gap-[2px] pr-[2px]">
            <button aria-label="チャートを最小化" className="flex size-9 items-center justify-center border-2 border-[#e5e5e5] bg-white">
              <svg viewBox="0 0 16 16" className="size-4"><path d="M1 13h12" stroke="#778899" strokeWidth="4" /></svg>
            </button>
            <button aria-label="チャートを元に戻す" className="flex size-9 items-center justify-center border-2 border-[#e5e5e5] bg-white">
              <svg viewBox="0 0 16 16" className="size-4" fill="none" stroke="#778899" strokeWidth="2">
                <path d="M5 5V2h10v8h-3M4 1.500h12M1 8h10v7H1zM0 7.500h12" />
              </svg>
            </button>
            <button aria-label="チャートを閉じる" className="flex size-9 items-center justify-center border-2 border-[#e5e5e5] bg-white">
              <svg viewBox="0 0 16 16" className="size-4"><path d="M2 2l12 12M14 2L2 14" stroke="#778899" strokeWidth="4" /></svg>
            </button>
          </div>
        </nav>

        <MainToolbar />
        <LineToolbar />

        <main className="relative flex min-h-0 flex-1 border-b-2 border-[#a0a0a0]">
          <div className="flex w-[536px] shrink-0 flex-col pr-[6px] pb-1 pl-[6px]">
            <MarketWatch />
            <Navigator />
          </div>
          <div className="min-w-0 flex-1 border-t-2 border-r-4 border-l-4 border-t-[#696969] border-r-[#e8e8e8] border-l-[#696969]">
            <Chart />
          </div>
          {/* callout frame around the market watch panel */}
          <div className="pointer-events-none absolute -top-[22px] -left-2 h-[544px] w-[558px] rounded-[22px] border-[5px] border-white">
            <div className="h-full rounded-[17px] border-[10px] border-[#f59a22]">
              <div className="h-full rounded-[7px] border-[5px] border-white" />
            </div>
          </div>
        </main>

        <div className="h-2 shrink-0 border-t-2 border-white" />
        <Terminal />
        <StatusBar />
      </div>
    </div>
  );
};

export default App;
